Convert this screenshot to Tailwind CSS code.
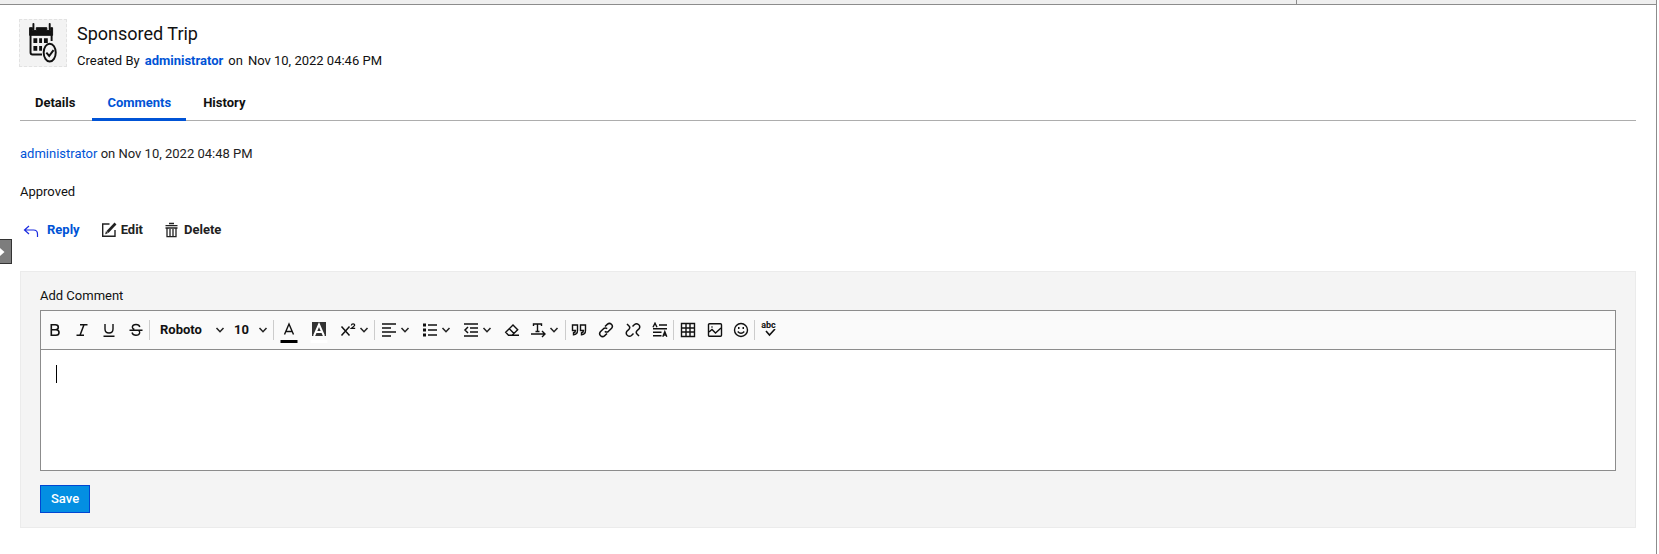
<!DOCTYPE html>
<html lang="en">
<head>
  <meta charset="UTF-8" />
  <meta name="viewport" content="width=device-width, initial-scale=1.0" />
  <title>Sponsored Trip</title>
  <script src="https://cdn.jsdelivr.net/npm/@tailwindcss/browser@4"></script>
</head>
<body class="bg-white font-[Roboto,sans-serif] text-[13px] leading-4 text-[#111]">

  <div class="mr-0.5 min-h-screen border-r border-[#8c8c8c]">
    <!-- Top strip -->
    <div class="flex h-[5px] border-b border-[#8c8c8c] bg-[#efefef]">
      <div class="flex-1 border-r border-[#8c8c8c]"></div>
      <div class="w-[359px]"></div>
    </div>

    <main class="relative px-5 pt-3.5 pb-6">
      <!-- Header -->
      <header class="-ml-px flex gap-2.5">
        <svg class="size-12 border border-dashed border-[#e2e2e2] bg-[#f3f3f3]" viewBox="0 0 48 48" fill="none" stroke="#111" aria-hidden="true">
          <path d="M14 4v6M31 4v6" stroke-width="2" stroke-linecap="round" />
          <path d="M10 8h3v3h4V8h11v3h4V8h2v8H10z" fill="#111" stroke-width="1" />
          <path d="M11 15v19q0 2 2 2h10M33 15v7" stroke-width="2" />
          <path d="M14 19h4v5h-4zM20 19h3v5h-3zM25 19h4v5h-4zM14 27h4v5h-4zM20 27h3v5h-3z" fill="#111" stroke="none" />
          <ellipse cx="31" cy="34" rx="6.3" ry="9.3" stroke-width="2" />
          <path d="M27.500 34l3 3.500 4.500-6" stroke-width="2" />
        </svg>
        <div>
          <h1 class="mt-[3px] text-lg leading-6">Sponsored Trip</h1>
          <p class="mt-[7px] flex gap-[5px]">
            <span>Created By</span>
            <a href="#" class="font-bold text-[#0053d6]">administrator</a>
            <span>on</span>
            <span>Nov 10, 2022 04:46 PM</span>
          </p>
        </div>
      </header>

      <!-- Tabs -->
      <nav class="mt-[22px] flex gap-0.5 border-b border-[#adadad] font-bold">
        <a href="#" class="-mb-px border-b-3 border-transparent px-[15px] pt-1 pb-[7px]">Details</a>
        <a href="#" aria-current="page" class="-mb-px border-b-3 border-[#0053d6] px-[15px] pt-1 pb-[7px] text-[#0053d6]">Comments</a>
        <a href="#" class="-mb-px border-b-3 border-transparent px-[15px] pt-1 pb-[7px]">History</a>
      </nav>

      <!-- Comment -->
      <article class="mt-[25px]">
        <p class="text-[#222]"><a href="#" class="text-[#0053d6]">administrator</a> on Nov 10, 2022 04:48 PM</p>
        <p class="mt-[22px]">Approved</p>
        <div class="mt-[22px] flex gap-[21px] pl-[3px] font-bold text-[#222]">
          <button type="button" class="flex items-center gap-2 text-[#0053d6]">
            <svg class="size-4" viewBox="0 0 16 16" fill="none" stroke="#1a2be0" stroke-width="1.2"><path d="M6 4L1.500 8 6 12M1.500 8h9q4 0 4 4v3" /></svg>
            Reply
          </button>
          <button type="button" class="flex items-center gap-1">
            <svg class="size-4" viewBox="0 0 16 16" fill="none" stroke="#222" stroke-width="1.4"><path d="M8.500 2H1.700v12.300H14V8" /><path d="M6.500 10L14.500 1.500" stroke-width="2.600" /><path d="M4.500 12l.7-2.500 1.500 1.500z" fill="#222" stroke-width=".5" /></svg>
            Edit
          </button>
          <button type="button" class="flex items-center gap-1">
            <svg class="size-4" viewBox="0 0 16 16" fill="none" stroke="#222" stroke-width="1.3"><path d="M5 1.500h5M1.500 3.700h12M3 6v8.700h9V6M1.500 6h12M6 7v7M9 7v7" /></svg>
            Delete
          </button>
        </div>
      </article>

      <!-- Side panel toggle -->
      <button type="button" aria-label="Expand panel" class="absolute top-[234px] left-0 h-[25px] w-3 border border-l-0 border-[#333] bg-[#7d7d7d]">
        <svg class="h-3 w-2" viewBox="0 0 8 12" fill="#fff"><path d="M0 2l4.500 4L0 10z" /></svg>
      </button>

      <!-- Add comment -->
      <form id="commentForm" class="mt-[33px] border border-[#ebebeb] bg-[#f4f4f4] px-[19px] pt-4 pb-3.5">
        <label for="comment" class="block">Add Comment</label>

        <div class="mt-1.5 border border-[#8c8c8c] bg-white">
          <div role="toolbar" aria-label="Formatting" class="flex h-[39px] items-center border-b border-[#8c8c8c] bg-[#fafafa]">
            <button type="button" aria-label="Bold" class="flex h-7 w-[27px] items-center justify-center">
              <svg class="size-4" viewBox="0 0 16 16" fill="none" stroke="#111" stroke-width="1.6"><path d="M4.300 2.800h4q3 0 3 2.500t-3 2.500h-4zM4.300 7.800h4.700q3 0 3 2.700t-3 2.700H4.300z" /></svg>
            </button>
            <button type="button" aria-label="Italic" class="flex h-7 w-[27px] items-center justify-center">
              <svg class="size-4" viewBox="0 0 16 16" fill="none" stroke="#111" stroke-width="1.5"><path d="M6 2.800h7.500M2.500 13.200H10M10 2.800L6 13.200" /></svg>
            </button>
            <button type="button" aria-label="Underline" class="flex h-7 w-[27px] items-center justify-center">
              <svg class="size-4" viewBox="0 0 16 16" fill="none" stroke="#111" stroke-width="1.4"><path d="M4 2v5q0 4 4 4t4-4V2M2.500 14.300h11" /></svg>
            </button>
            <button type="button" aria-label="Strikethrough" class="flex h-7 w-[27px] items-center justify-center">
              <svg class="size-4" viewBox="0 0 16 16" fill="none" stroke="#111" stroke-width="1.4"><path d="M11.800 5q-.5-2.500-3.800-2.500T4.300 5q0 1.500 2 2.500M1.500 8.200h13M10.500 8.500q1.500 1 1.200 2.300-.5 2.500-3.700 2.500t-4-2.800" /></svg>
            </button>
            <span class="h-5 w-px bg-[#ccc]"></span>

            <span class="relative w-20">
              <select aria-label="Font family" class="w-full appearance-none pl-2.5 font-bold outline-none">
                <option>Roboto</option>
                <option>Arial</option>
                <option>Georgia</option>
              </select>
              <svg class="pointer-events-none absolute top-1 right-[5px] h-2 w-2.5" viewBox="0 0 10 8" fill="none" stroke="#222" stroke-width="1.500"><path d="M1.500 2L5 5.700 8.500 2" /></svg>
            </span>
            <span class="relative w-[43px]">
              <select aria-label="Font size" class="w-full appearance-none pl-1 font-bold outline-none">
                <option>10</option>
                <option>12</option>
                <option>14</option>
              </select>
              <svg class="pointer-events-none absolute top-1 right-[5px] h-2 w-2.5" viewBox="0 0 10 8" fill="none" stroke="#222" stroke-width="1.500"><path d="M1.500 2L5 5.700 8.500 2" /></svg>
            </span>
            <span class="h-5 w-px bg-[#ccc]"></span>

            <button type="button" aria-label="Text color" class="flex h-7 w-[30px] items-end justify-center">
              <svg class="h-6 w-[18px]" viewBox="0 0 18 24" fill="none" stroke="#111" stroke-width="1.400"><path d="M4.500 14.500L9 4l4.500 10.500M6 11.500h6" /><path d="M.5 20h17v3H.5z" fill="#000" stroke="none" /></svg>
            </button>
            <button type="button" aria-label="Background color" class="flex h-7 w-[30px] items-end justify-center">
              <svg class="h-6 w-[18px]" viewBox="0 0 18 24" fill="none"><path d="M2 2h14v14H2z" fill="#333" /><path d="M4 16L9 4.500 14 16M6 12h6" stroke="#fff" stroke-width="2" /><path d="M.5 20h17v3H.5z" fill="#fff" /></svg>
            </button>
            <button type="button" aria-label="Superscript" class="flex h-7 w-10 items-center gap-[3px] pl-1.5">
              <svg class="size-4" viewBox="0 0 16 16" fill="none" stroke="#111" stroke-width="1.500"><path d="M1.500 4.500l8 9M9.500 4.500l-8 9" /><path d="M11.300 3.500q.2-1.700 1.800-1.700t1.600 1.300q0 1-3.200 3.200h3.700" stroke-width="1.200" /></svg>
              <svg class="h-2 w-2.5" viewBox="0 0 10 8" fill="none" stroke="#222" stroke-width="1.500"><path d="M1.500 2L5 5.700 8.500 2" /></svg>
            </button>
            <span class="h-5 w-px bg-[#ccc]"></span>

            <button type="button" aria-label="Align" class="flex h-7 w-[41px] items-center gap-[3px] pl-1.5">
              <svg class="size-4" viewBox="0 0 16 16" fill="none" stroke="#111" stroke-width="1.500"><path d="M1 2h14M1 6h9M1 10h14M1 14h9" /></svg>
              <svg class="h-2 w-2.5" viewBox="0 0 10 8" fill="none" stroke="#222" stroke-width="1.500"><path d="M1.500 2L5 5.700 8.500 2" /></svg>
            </button>
            <button type="button" aria-label="List" class="flex h-7 w-[41px] items-center gap-[3px] pl-1.5">
              <svg class="size-4" viewBox="0 0 16 16" fill="none" stroke="#111" stroke-width="1.500"><path d="M6 3h9M6 8h9M6 13h9" /><path d="M1 1.500h3v3H1zM1 6.500h3v3H1zM1 11.500h3v3H1z" fill="#111" stroke="none" /></svg>
              <svg class="h-2 w-2.5" viewBox="0 0 10 8" fill="none" stroke="#222" stroke-width="1.500"><path d="M1.500 2L5 5.700 8.500 2" /></svg>
            </button>
            <button type="button" aria-label="Indent" class="flex h-7 w-[41px] items-center gap-[3px] pl-1.5">
              <svg class="size-4" viewBox="0 0 16 16" fill="none" stroke="#111" stroke-width="1.500"><path d="M1 2h14M7 6h8M7 10h8M1 14h14M5 5L2 8l3 3" /></svg>
              <svg class="h-2 w-2.5" viewBox="0 0 10 8" fill="none" stroke="#222" stroke-width="1.500"><path d="M1.500 2L5 5.700 8.500 2" /></svg>
            </button>
            <button type="button" aria-label="Clear formatting" class="flex h-7 w-[27px] items-center justify-center">
              <svg class="size-4" viewBox="0 0 16 16" fill="none" stroke="#111" stroke-width="1.400"><path d="M8 13.200H4.500L1.700 10.300 9 3l4.700 4.700L8 13.200h7M5.300 6.700l4.700 4.700" /></svg>
            </button>
            <button type="button" aria-label="Text direction" class="flex h-7 w-10 items-center gap-[3px] pl-[5px]">
              <svg class="size-4" viewBox="0 0 16 16" fill="none" stroke="#111" stroke-width="1.400"><path d="M3.500 4V2h8v2M7.500 2v7.500M5.500 9.500h4M1 12h13.500M12 9l3 3-3 3" /></svg>
              <svg class="h-2 w-2.5" viewBox="0 0 10 8" fill="none" stroke="#222" stroke-width="1.500"><path d="M1.500 2L5 5.700 8.500 2" /></svg>
            </button>
            <span class="h-5 w-px bg-[#ccc]"></span>

            <button type="button" aria-label="Quote" class="flex h-7 w-[26px] items-center justify-center">
              <svg class="size-4" viewBox="0 0 16 16" fill="none" stroke="#111" stroke-width="1.400"><path d="M1.500 3h5v5.500q0 4-4 4.300v-2q2-.3 2-2.300h-3zM9.500 3h5v5.500q0 4-4 4.300v-2q2-.3 2-2.300h-3z" /></svg>
            </button>
            <button type="button" aria-label="Insert link" class="flex h-7 w-[27px] items-center justify-center">
              <svg class="size-4" viewBox="0 0 16 16" fill="none" stroke="#111" stroke-width="1.500"><path d="M7 4.500l2.500-2.400q2-1.600 3.900.2t.2 3.900L10.500 9.300q-1.800 1.500-3.700 0M9 11.500l-2.500 2.400q-2 1.600-3.900-.2t-.2-3.900l3.100-3.100q1.800-1.500 3.700 0" /></svg>
            </button>
            <button type="button" aria-label="Remove link" class="flex h-7 w-[27px] items-center justify-center">
              <svg class="size-4" viewBox="0 0 16 16" fill="none" stroke="#111" stroke-width="1.500"><path d="M7.500 4.500l2-2q2-1.500 4 0t.8 4L12 8.800q-1.500 1.700 0 3.200l2 2M8.500 11.500l-2 2q-2 1.500-4 0t-.8-4L4 7.200q1.500-1.700 0-3.200L2 2" /></svg>
            </button>
            <button type="button" aria-label="Line height" class="flex h-7 w-[27px] items-center justify-center">
              <svg class="size-4" viewBox="0 0 16 16" fill="none" stroke="#111" stroke-width="1.400"><path d="M7 3h8M1 6.800h14M1 10.200h8.500M1 13.700h8.500M1 5.200L3 1.200l2 4M10.800 14.700l2-5 2 5M11.500 13h2.600" /></svg>
            </button>
            <span class="h-5 w-px bg-[#ccc]"></span>

            <button type="button" aria-label="Insert table" class="flex h-7 w-[27px] items-center justify-center">
              <svg class="size-4" viewBox="0 0 16 16" fill="none" stroke="#111" stroke-width="1.400"><path d="M1.500 1.500h13v13h-13zM1.500 6h13M1.500 10h13M6 1.500v13M10 1.500v13" /></svg>
            </button>
            <button type="button" aria-label="Insert image" class="flex h-7 w-[27px] items-center justify-center">
              <svg class="size-4" viewBox="0 0 16 16" fill="none" stroke="#111" stroke-width="1.400"><rect x="1.500" y="1.700" width="13" height="12.600" rx="1" /><path d="M2 10l3-2.500L8.500 11 14 6" /><circle cx="5" cy="5" r=".8" fill="#111" stroke="none" /></svg>
            </button>
            <button type="button" aria-label="Insert emoji" class="flex h-7 w-[26px] items-center justify-center">
              <svg class="size-4" viewBox="0 0 16 16" fill="none" stroke="#111" stroke-width="1.400"><circle cx="8" cy="8" r="6.500" /><path d="M4.700 9.500q3.300 3.500 6.600 0" /><path d="M5 5h1.500v2H5zM9.500 5H11v2H9.500z" fill="#111" stroke="none" /></svg>
            </button>
            <span class="h-5 w-px bg-[#ccc]"></span>

            <button type="button" aria-label="Spell check" class="flex h-7 w-[27px] flex-col items-center pt-1.5 text-[9px] leading-[7px] font-bold">
              abc
              <svg class="h-2 w-3.5" viewBox="0 0 14 8" fill="none" stroke="#111" stroke-width="1.600"><path d="M4 2l3.500 4L13 0" /></svg>
            </button>
          </div>

          <div class="relative">
            <textarea id="comment" class="block h-[120px] w-full resize-none px-3.5 py-4 outline-none"></textarea>
            <span class="pointer-events-none absolute top-[15px] left-[15px] h-[18px] w-px bg-black"></span>
          </div>
        </div>

        <button type="submit" class="mt-3.5 h-7 border border-[#0046d2] bg-[#038fe2] px-2.5 font-medium text-white">Save</button>
      </form>
    </main>
  </div>

  <script>
    const form = document.getElementById("commentForm");
    form.addEventListener("submit", function (e) {
      e.preventDefault();
      form.reset();
    });
  </script>

</body>
</html>
